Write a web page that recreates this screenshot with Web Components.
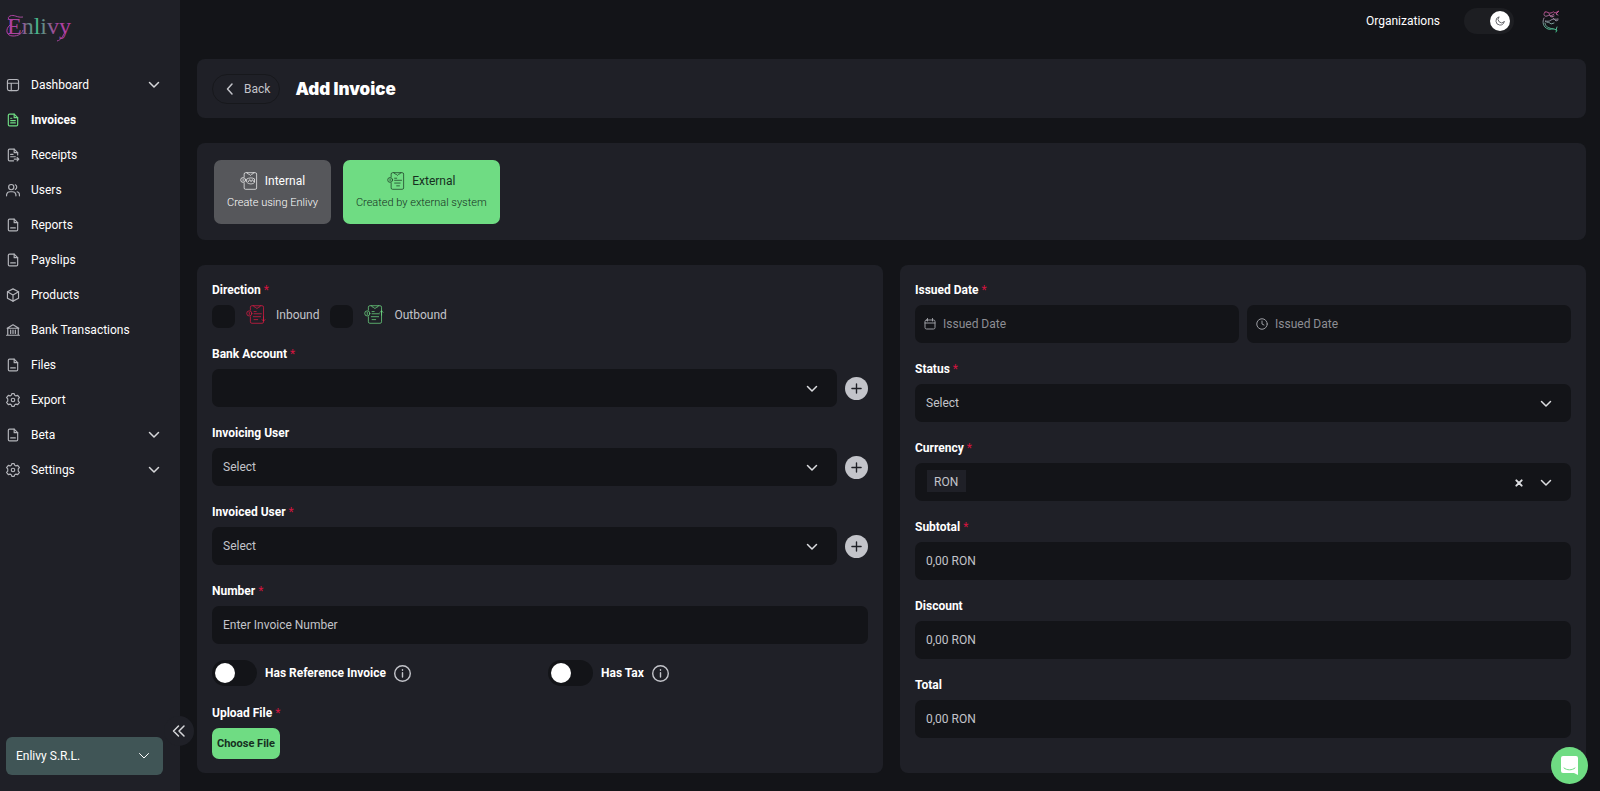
<!DOCTYPE html>
<html lang="en">
<head>
<meta charset="utf-8">
<meta name="viewport" content="width=device-width, initial-scale=1">
<title>Enlivy - Add Invoice</title>
<style>
    :root {
        --bg: #131418;
        --panel: #1f2027;
        --text: #ffffff;
        --muted: #c3c4ca;
        --green: #6fdc83;
        --red: #d3143f;
    }
    * { box-sizing: border-box; }
    body {
        margin: 0;
        background: var(--bg);
        color: var(--text);
        font: 12px/20px Roboto, "Liberation Sans", sans-serif;
    }
    .layout { display: flex; min-height: 100vh; }
    main { flex: 1; min-width: 0; padding: 0 14px 18px 17px; }
    .content { display: flex; flex-direction: column; gap: 25px; }
    .choices { display: flex; gap: 12px; }
    .columns { display: grid; grid-template-columns: 1fr 1fr; gap: 17px; }
    .stack { display: flex; flex-direction: column; gap: 16px; }
    .switches { display: grid; grid-template-columns: 1fr 1fr; gap: 16px; }
</style>
</head>
<body>
<div class="layout">
    <side-bar></side-bar>
    <main>
        <top-bar></top-bar>
        <div class="content">
            <page-title>Add Invoice</page-title>
            <panel-card roomy>
                <div class="choices">
                    <type-choice icon="internal" name="Internal">Create using Enlivy</type-choice>
                    <type-choice icon="external" name="External" selected>Created by external system</type-choice>
                </div>
            </panel-card>
            <div class="columns">
                <panel-card>
                    <div class="stack">
                        <direction-field></direction-field>
                        <select-field label="Bank Account" required add></select-field>
                        <select-field label="Invoicing User" value="Select" add></select-field>
                        <select-field label="Invoiced User" value="Select" required add></select-field>
                        <text-field label="Number" placeholder="Enter Invoice Number" required></text-field>
                        <div class="switches">
                            <switch-field label="Has Reference Invoice"></switch-field>
                            <switch-field label="Has Tax"></switch-field>
                        </div>
                        <file-field label="Upload File"></file-field>
                    </div>
                </panel-card>
                <panel-card>
                    <div class="stack">
                        <date-field label="Issued Date"></date-field>
                        <select-field label="Status" value="Select" required></select-field>
                        <select-field label="Currency" value="RON" required tag></select-field>
                        <text-field label="Subtotal" placeholder="0,00 RON" required></text-field>
                        <text-field label="Discount" placeholder="0,00 RON"></text-field>
                        <text-field label="Total" placeholder="0,00 RON"></text-field>
                    </div>
                </panel-card>
            </div>
        </div>
    </main>
</div>
<chat-button></chat-button>

<script>
const FILE = '<path d="M14 2H6a2 2 0 0 0-2 2v16a2 2 0 0 0 2 2h12a2 2 0 0 0 2-2V8z"/><path d="M14 2v6h6"/>';
const SHEET = '<path d="M6 7V3a2 2 0 0 1 2-2h14a2 2 0 0 1 2 2v20a2 2 0 0 1-2 2H8a2 2 0 0 1-2-2v-7"/><path d="M10 1c1 3 3 1 5 4 2-3 4-1 5-4"/><circle cx="4.500" cy="11.500" r="3.500"/><path d="M4.500 10v3"/>';
const ICONS = {
    dashboard: '<rect x="2.500" y="2.500" width="19" height="19" rx="3"/><path d="M2.500 9h19M9 9v12.500"/>',
    invoice: FILE + '<path d="M8 9h2M8 13h8M8 17h8"/>',
    receipt: '<path d="M20 12V8l-6-6H6a2 2 0 0 0-2 2v16a2 2 0 0 0 2 2h7"/><path d="M14 2v6h6M8 11h4M8 15h8M14 19h8M19 16l3 3-3 3"/>',
    users: '<circle cx="9" cy="7" r="4.500"/><path d="M1 22v-2a6 6 0 0 1 6-5h4a6 6 0 0 1 6 5v2M16 3a4.500 4.500 0 0 1 0 8M19 15a5 5 0 0 1 4 5v2"/>',
    file: FILE + '<path d="M8 17h8"/>',
    box: '<path d="M12 1.500l9.500 5v11l-9.500 5-9.500-5v-11z"/><path d="M2.500 6.500L12 12l9.500-5.500M12 12v10.500"/>',
    bank: '<path d="M2 9l10-6 10 6zM3 9v11M21 9v11M8 12v6M12 12v6M16 12v6M1 21h22"/>',
    gear: '<circle cx="12" cy="12" r="3"/><path d="M10 1h4l1 3 2 1 3-1 3 4-2 2v4l2 2-3 4-3-1-2 1-1 3h-4l-1-3-2-1-3 1-3-4 2-2v-4L1 8l3-4 3 1 2-1z"/>',
    chevron: '<path d="M3 7l9 9 9-9"/>',
    back: '<path d="M16 2L7 12l9 10"/>',
    collapse: '<path d="M11 2L1 12l10 10M22 2L12 12l10 10"/>',
    plus: '<path d="M12 2v20M2 12h20"/>',
    close: '<path d="M4 4l16 16M20 4L4 20"/>',
    moon: '<path d="M22 14A10 10 0 1 1 10 2a8 8 0 0 0 12 12z"/>',
    info: '<circle cx="12" cy="12" r="11"/><path d="M12 11v6M12 6.500v1"/>',
    calendar: '<rect x="2" y="4" width="20" height="18" rx="3"/><path d="M2 10h20M7 1v5M17 1v5"/>',
    clock: '<circle cx="12" cy="12" r="10.500"/><path d="M12 6v6l4 2"/>',
    internal: SHEET + '<path d="M10 10c3-2 8-2 11 0v5c-3 3-8 3-11 0zM12 14l2-3 2 3 2-3 2 3"/>',
    external: SHEET + '<path d="M11 9h3M11 12h10M11 16h8M14 20h4"/>',
    inbound: SHEET + '<path d="M11 9h3M11 12h10M10 16h10M11 20h5M24 16v6M22 20l2 2 2-2"/>',
    outbound: SHEET + '<path d="M11 9h3M11 12h10M10 16h10M11 20h5M24 14V8M22 10l2-2 2 2"/>'
};

let uid = 0;

// shared base: every element renders styles + markup into an open root
class BaseElement extends HTMLElement {
    constructor(){
        super();
        this.attachShadow({mode: "open"});
        this.uid = 'field-' + (++uid);
    }
    attr(name){
        return this.getAttribute(name) || '';
    }
    getStyles(){
        return '';
    }
    getTemplate(){
        return '';
    }
    connectedCallback(){
        const template = document.createElement('template');
        template.innerHTML = `
            <style>
                * { box-sizing: border-box; }
                :host { display: block; }
                button, input, select { font: inherit; color: inherit; margin: 0; }
                button { border: 0; background: none; padding: 0; cursor: pointer; }
                a { color: inherit; text-decoration: none; }
                ${this.getStyles()}
            </style>
            ${this.getTemplate()}
        `;
        this.shadowRoot.replaceChildren(template.content.cloneNode(true));
    }
}

class UiIcon extends BaseElement {
    getStyles(){
        return `
            :host { display: inline-flex; flex: none; width: 14px; height: 14px; }
            svg { width: 100%; height: 100%; overflow: visible; fill: none; stroke: currentColor;
                stroke-width: var(--stroke, 2); stroke-linecap: round; stroke-linejoin: round; }
        `;
    }
    getTemplate(){
        const name = this.attr('name');
        const size = ['internal', 'external', 'inbound', 'outbound'].includes(name) ? 26 : 24;
        return `<svg viewBox="0 0 ${size} ${size}" aria-hidden="true">${ICONS[name]}</svg>`;
    }
}

class BrandLogo extends BaseElement {
    getStyles(){
        return `
            svg { display: block; width: 66px; height: 30px; }
            text { font: 24px "Liberation Serif", serif; }
        `;
    }
    getTemplate(){
        return `
            <svg viewBox="0 0 66 30" role="img" aria-label="Enlivy">
                <defs>
                    <linearGradient id="ink" gradientUnits="userSpaceOnUse" x1="0" y1="0" x2="64" y2="0">
                        <stop offset="0" stop-color="#b83aa6"/>
                        <stop offset=".25" stop-color="#a04b98"/>
                        <stop offset=".34" stop-color="#6e7f86"/>
                        <stop offset=".48" stop-color="#45b98a"/>
                        <stop offset=".62" stop-color="#6e7f86"/>
                        <stop offset=".76" stop-color="#a3479b"/>
                        <stop offset="1" stop-color="#b83aa6"/>
                    </linearGradient>
                </defs>
                <text x="1" y="21" fill="url(#ink)">Enlivy</text>
                <path d="M17 4C11 5 8 1 4 3s0 5 3 4M4 12c-5 4-4 11 3 11 5 0 9-2 10-6M51 28c4-1 6-5 8-9" fill="none" stroke="url(#ink)" stroke-width="1"/>
            </svg>
        `;
    }
}

class SideBar extends BaseElement {
    getStyles(){
        return `
            :host { position: relative; flex: none; width: 180px; background: var(--panel); }
            aside { position: sticky; top: 0; display: flex; flex-direction: column; height: 100vh; padding: 13px 17px 16px 6px; }
            nav { flex: 1; padding-top: 24px; }
            nav a { display: flex; align-items: center; height: 35px; gap: 11px; }
            nav a ui-icon { color: #b4b5bb; }
            nav a .label { flex: 1; }
            nav a .more { width: 12px; height: 12px; margin-right: 3px; --stroke: 3; color: #d6d7da; }
            nav a.active { font-weight: 700; }
            nav a.active ui-icon { color: var(--green); }
            .org { display: flex; align-items: center; justify-content: space-between; height: 38px; padding: 0 13px 0 10px;
                border-radius: 6px; background: #405556; }
            .org ui-icon { width: 12px; height: 12px; }
            .collapse { position: absolute; right: -14px; bottom: 45px; display: grid; place-items: center;
                width: 30px; height: 30px; border-radius: 50%; background: var(--panel); }
            .collapse ui-icon { width: 12px; height: 12px; --stroke: 3; color: #d6d7da; }
        `;
    }
    getTemplate(){
        const items = [
            ['dashboard', 'Dashboard', true], ['invoice', 'Invoices'], ['receipt', 'Receipts'],
            ['users', 'Users'], ['file', 'Reports'], ['file', 'Payslips'], ['box', 'Products'],
            ['bank', 'Bank Transactions'], ['file', 'Files'], ['gear', 'Export'],
            ['file', 'Beta', true], ['gear', 'Settings', true]
        ];
        return `
            <aside>
                <brand-logo></brand-logo>
                <nav>
                    ${items.map(([icon, label, more]) => `
                        <a href="#" class="${label === 'Invoices' ? 'active' : ''}">
                            <ui-icon name="${icon}"></ui-icon>
                            <span class="label">${label}</span>
                            ${more ? '<ui-icon class="more" name="chevron"></ui-icon>' : ''}
                        </a>`).join('')}
                </nav>
                <button class="org" type="button">Enlivy S.R.L.<ui-icon name="chevron"></ui-icon></button>
                <button class="collapse" type="button" aria-label="Collapse menu"><ui-icon name="collapse"></ui-icon></button>
            </aside>
        `;
    }
}

class TopBar extends BaseElement {
    getStyles(){
        return `
            header { display: flex; align-items: center; justify-content: flex-end; height: 42px; margin-bottom: 17px; padding-right: 25px; }
            .theme { position: relative; display: flex; margin: 0 27px 0 24px; color: #4b4c52; }
            .theme input { appearance: none; display: flex; justify-content: flex-end; align-items: center;
                width: 50px; height: 26px; padding: 4px; border-radius: 13px; background: #1d1e22; }
            .theme input::before { content: ""; width: 20px; height: 20px; border-radius: 50%; background: #fff; }
            .theme ui-icon { position: absolute; right: 9px; top: 8px; width: 10px; height: 10px; }
            .avatar { display: flex; }
            .avatar svg { width: 20px; height: 24px; }
        `;
    }
    getTemplate(){
        return `
            <header>
                <a href="#">Organizations</a>
                <label class="theme">
                    <input type="checkbox" role="switch" aria-label="Dark mode" checked>
                    <ui-icon name="moon"></ui-icon>
                </label>
                <a class="avatar" href="#" aria-label="Profile">
                    <svg viewBox="0 0 20 24" fill="none" stroke="url(#skin)" stroke-linecap="round">
                        <defs>
                            <linearGradient id="skin" gradientUnits="userSpaceOnUse" x1="0" y1="2" x2="0" y2="22">
                                <stop offset="0" stop-color="#c0468e"/>
                                <stop offset=".5" stop-color="#8a909c"/>
                                <stop offset="1" stop-color="#3fbf8a"/>
                            </linearGradient>
                        </defs>
                        <path d="M4 3c3-1 3 2 6 1s2-2 4 0l4-2-3 3 2 1"/>
                        <path d="M4 3C2 5 3 8 6 7s2-1 4 0l3-2M8 5l2 3 3-1"/>
                        <path d="M17 10c-3 1-4-1-7 1-2 2-4 1-6 1 2 2 5 1 6 3l3-1M12 9l3 3 2-1"/>
                        <path d="M3 9c-2 4-1 9 4 11 3 1 4-1 6 0l3 1-1 2M16 18l-1 3"/>
                        <path d="M4 14c0 4 4 5 8 6"/>
                    </svg>
                </a>
            </header>
        `;
    }
}

class PanelCard extends BaseElement {
    getStyles(){
        return `
            :host { padding: 15px 15px 14px; border-radius: 8px; background: var(--panel); }
            :host([roomy]) { padding: 17px 17px 16px; }
        `;
    }
    getTemplate(){
        return `<slot></slot>`;
    }
}

class PageTitle extends BaseElement {
    getStyles(){
        return `
            section { display: flex; align-items: center; gap: 15px; }
            button { display: flex; align-items: center; gap: 8px; height: 30px; padding: 0 9px 0 11px;
                border: 1px solid #17181c; border-radius: 15px; color: var(--muted); }
            button ui-icon { width: 12px; height: 12px; --stroke: 3; }
            h1 { margin: 0; font: 900 17px/28px Inter, sans-serif; }
        `;
    }
    getTemplate(){
        return `
            <panel-card>
                <section>
                    <button type="button"><ui-icon name="back"></ui-icon>Back</button>
                    <h1><slot></slot></h1>
                </section>
            </panel-card>
        `;
    }
}

class TypeChoice extends BaseElement {
    getStyles(){
        return `
            button { display: flex; flex-direction: column; align-items: center; gap: 2px; height: 64px; padding: 11px 13px;
                border-radius: 7px; background: #56575b; color: #fff; }
            .name { display: flex; align-items: center; gap: 7px; }
            ui-icon { width: 18px; height: 18px; --stroke: 1; }
            .hint { font-size: 11px; font-weight: 300; }
            :host([selected]) button { background: var(--green); color: #16301f; }
        `;
    }
    getTemplate(){
        return `
            <button type="button" aria-pressed="${this.hasAttribute('selected')}">
                <span class="name"><ui-icon name="${this.attr('icon')}"></ui-icon>${this.attr('name')}</span>
                <span class="hint"><slot></slot></span>
            </button>
        `;
    }
}

// label row + dark control, reused by the fields below
class FieldElement extends BaseElement {
    getStyles(){
        return `
            .title { display: block; margin-bottom: 5px; font-weight: 700; }
            .title i { font-style: normal; font-weight: 400; color: var(--red); }
            .row { display: flex; align-items: center; gap: 8px; }
            .control { position: relative; flex: 1; min-width: 0; }
            .control input, .control select { appearance: none; display: block; width: 100%; height: 38px; padding: 0 11px;
                border: 0; border-radius: 7px; outline: 0; background: var(--bg); color: var(--muted); }
            .control input::placeholder { color: var(--muted); opacity: 1; }
        `;
    }
    getLabel(required = this.hasAttribute('required')){
        return `<label class="title" for="${this.uid}">${this.attr('label')}${required ? ' <i>*</i>' : ''}</label>`;
    }
}

class TextField extends FieldElement {
    getTemplate(){
        return `
            ${this.getLabel()}
            <div class="control"><input id="${this.uid}" type="text" placeholder="${this.attr('placeholder')}"></div>
        `;
    }
}

class SelectField extends FieldElement {
    getStyles(){
        return super.getStyles() + `
            .arrow { position: absolute; right: 19px; top: 14px; width: 12px; height: 12px; --stroke: 3; color: #dcdde0; pointer-events: none; }
            .clear { position: absolute; right: 47px; top: 14px; display: flex; --stroke: 6; color: #dcdde0; }
            .clear ui-icon { width: 8px; height: 8px; margin: 2px 1px; }
            .add { display: grid; place-items: center; width: 23px; height: 23px; border-radius: 50%; background: #c3c4ca; color: #1f2027; }
            .add ui-icon { width: 11px; height: 11px; --stroke: 3; }
            :host([tag]) select { padding-left: 19px;
                background: linear-gradient(#1f2027, #1f2027) 12px 7px / 39px 22px no-repeat var(--bg); }
        `;
    }
    getTemplate(){
        return `
            ${this.getLabel()}
            <div class="row">
                <div class="control">
                    <select id="${this.uid}"><option>${this.attr('value')}</option></select>
                    ${this.hasAttribute('tag') ? '<button class="clear" type="button" aria-label="Clear"><ui-icon name="close"></ui-icon></button>' : ''}
                    <ui-icon class="arrow" name="chevron"></ui-icon>
                </div>
                ${this.hasAttribute('add') ? '<button class="add" type="button" aria-label="Add"><ui-icon name="plus"></ui-icon></button>' : ''}
            </div>
        `;
    }
}

class DateField extends FieldElement {
    getStyles(){
        return super.getStyles() + `
            .control input { padding-left: 28px; }
            .control input::placeholder { color: #8d8e94; }
            .control ui-icon { position: absolute; left: 9px; top: 13px; width: 12px; height: 12px; color: #9b9ca2; }
        `;
    }
    getTemplate(){
        return `
            ${this.getLabel(true)}
            <div class="row">
                <div class="control"><input id="${this.uid}" type="text" placeholder="Issued Date"><ui-icon name="calendar"></ui-icon></div>
                <div class="control"><input type="text" placeholder="Issued Date" aria-label="Issued time"><ui-icon name="clock"></ui-icon></div>
            </div>
        `;
    }
}

class DirectionField extends FieldElement {
    getStyles(){
        return super.getStyles() + `
            .options { display: flex; gap: 11px; }
            .options label { display: flex; align-items: center; gap: 11px; line-height: 18px; color: var(--muted); }
            input { appearance: none; width: 23px; height: 23px; border-radius: 7px; background: var(--bg); }
            input:checked { background: var(--green); }
            ui-icon { width: 19px; height: 19px; --stroke: 1; margin-bottom: 4px; }
            .in { color: #e01b45; }
            .out { color: var(--green); }
            .text { margin-bottom: 4px; }
        `;
    }
    getTemplate(){
        return `
            <span class="title" id="${this.uid}">Direction <i>*</i></span>
            <div class="options" role="group" aria-labelledby="${this.uid}">
                <label><input type="checkbox"><ui-icon class="in" name="inbound"></ui-icon><span class="text">Inbound</span></label>
                <label><input type="checkbox"><ui-icon class="out" name="outbound"></ui-icon><span class="text">Outbound</span></label>
            </div>
        `;
    }
}

class SwitchField extends BaseElement {
    getStyles(){
        return `
            :host { display: flex; align-items: center; gap: 8px; padding-bottom: 1px; }
            label { display: flex; align-items: center; gap: 8px; font-weight: 700; }
            input { appearance: none; display: flex; align-items: center; width: 45px; height: 26px; padding: 3px;
                border-radius: 13px; background: var(--bg); }
            input::before { content: ""; width: 20px; height: 20px; border-radius: 50%; background: #fff; }
            input:checked { justify-content: flex-end; background: var(--green); }
            button { display: flex; color: var(--muted); }
            ui-icon { width: 17px; height: 17px; }
        `;
    }
    getTemplate(){
        return `
            <label><input type="checkbox" role="switch">${this.attr('label')}</label>
            <button type="button" aria-label="More info"><ui-icon name="info"></ui-icon></button>
        `;
    }
}

class FileField extends FieldElement {
    getStyles(){
        return super.getStyles() + `
            button { display: block; height: 31px; padding: 0 5px; border-radius: 7px; background: var(--green); color: #16301f; font-size: 11px; font-weight: 700; }
        `;
    }
    getTemplate(){
        return `
            ${this.getLabel(true)}
            <input id="${this.uid}" type="file" hidden>
            <button type="button">Choose File</button>
        `;
    }
    connectedCallback(){
        super.connectedCallback();
        this.shadowRoot.querySelector('button').addEventListener('click', () => {
            this.shadowRoot.querySelector('input').click();
        });
    }
}

class ChatButton extends BaseElement {
    getStyles(){
        return `
            :host { position: fixed; right: 12px; bottom: 7px; }
            button { display: grid; place-items: center; width: 37px; height: 37px; border-radius: 50%; background: var(--green); }
            svg { width: 17px; height: 19px; }
        `;
    }
    getTemplate(){
        return `
            <button type="button" aria-label="Open chat">
                <svg viewBox="0 0 17 19" aria-hidden="true">
                    <path d="M2 0h13a2 2 0 0 1 2 2v17l-4-2H2a2 2 0 0 1-2-2V2a2 2 0 0 1 2-2z" fill="#fff"/>
                    <path d="M3 12c3 2.500 8 2.500 11 0" fill="none" stroke="#6fdc83" stroke-linecap="round"/>
                </svg>
            </button>
        `;
    }
}

customElements.define('ui-icon', UiIcon);
customElements.define('brand-logo', BrandLogo);
customElements.define('side-bar', SideBar);
customElements.define('top-bar', TopBar);
customElements.define('panel-card', PanelCard);
customElements.define('page-title', PageTitle);
customElements.define('type-choice', TypeChoice);
customElements.define('text-field', TextField);
customElements.define('select-field', SelectField);
customElements.define('date-field', DateField);
customElements.define('direction-field', DirectionField);
customElements.define('switch-field', SwitchField);
customElements.define('file-field', FileField);
customElements.define('chat-button', ChatButton);
</script>
</body>
</html>
